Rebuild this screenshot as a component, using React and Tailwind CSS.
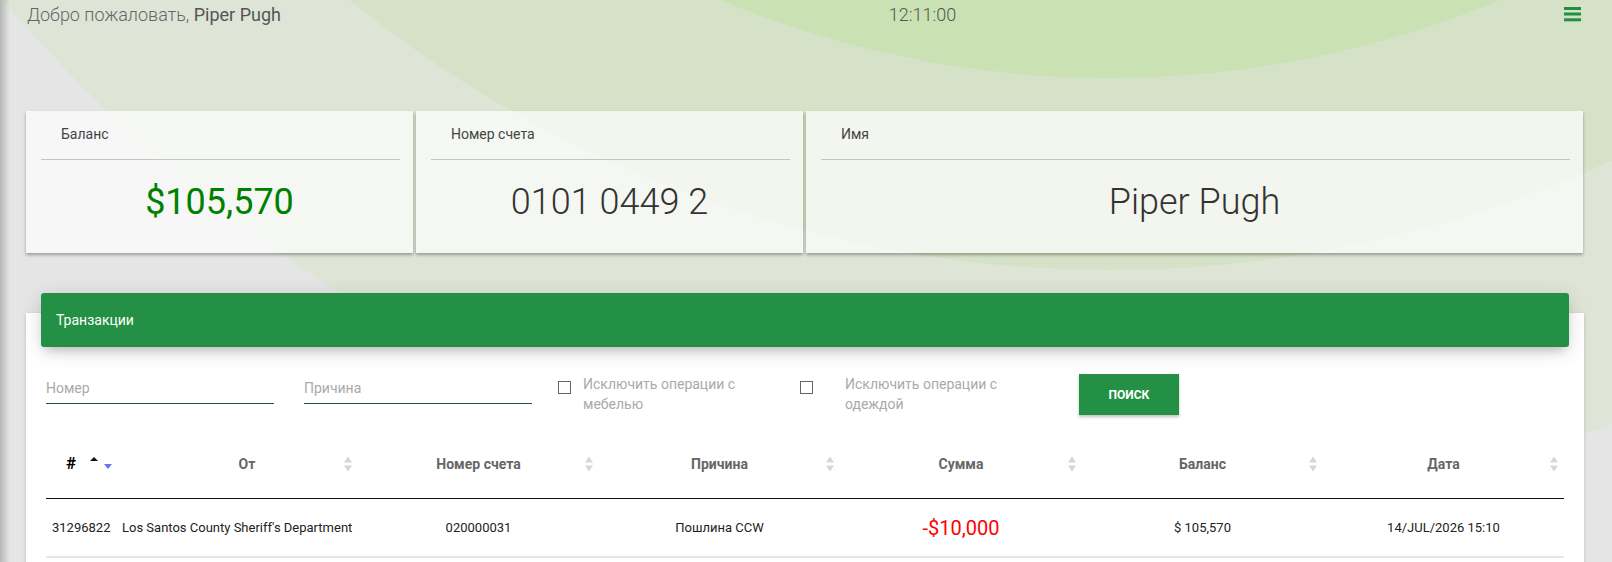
import React from "react";

function SortIcon() {
  return (
    <svg width="8" height="15" viewBox="0 0 8 15" className="absolute right-[6px] top-1/2 -translate-y-1/2">
      <path d="M0 6 L4 0 L8 6 Z" fill="#d6d6d6" />
      <path d="M0 9 L8 9 L4 15 Z" fill="#d6d6d6" />
    </svg>
  );
}

function StatCard({ label, value, valueClass, span }) {
  return (
    <div className={`flex h-[142px] flex-col bg-white/70 shadow-[0_2px_3px_rgba(0,0,0,0.32)] ${span || ""}`}>
      <div className="h-[48px] pl-[35px] pt-[13px] text-[14px] leading-5 text-[#444]">{label}</div>
      <div className="ml-[15px] mr-[13px] border-t border-[#c4c6c1]" />
      <div className="flex flex-1 items-center justify-center pb-[9px]">
        <span className={`text-[36px] leading-[43px] ${valueClass}`}>{value}</span>
      </div>
    </div>
  );
}

export default function App() {
  const cols = "grid grid-cols-[70px_242px_241px_241px_242px_241px_241px]";
  return (
    <div className="relative h-screen w-full overflow-hidden bg-[#e6e6e6] font-['Roboto',sans-serif]">
      <svg className="absolute left-0 top-0" width="1612" height="562" viewBox="0 0 1612 562">
        <rect x="0" y="0" width="1612" height="562" fill="#e5e5e5" />
        <circle cx="1110" cy="-936" r="1450" fill="#dee5d6" />
        <circle cx="1110" cy="-936" r="1206" fill="#d5e2c7" />
        <circle cx="1110" cy="-936" r="1014" fill="#c9e1b3" />
      </svg>
      <div className="absolute left-0 top-0 h-full w-[10px] bg-gradient-to-r from-black/20 to-transparent" />

      <div className="relative">
        {/* top bar */}
        <div className="flex items-start justify-between pl-[27px] pr-[31px] pt-[3px]">
          <div className="text-[18px] leading-6 font-light text-[#666]">
            Добро пожаловать, <span className="font-normal text-[#555]">Piper Pugh</span>
          </div>
          <div className="text-[18px] leading-6 font-light text-[#555]">12:11:00</div>
          <svg width="17" height="16" viewBox="0 0 17 16" className="mt-[4px]">
            <rect x="0" y="0" width="17" height="3" fill="#23903f" />
            <rect x="0" y="5.5" width="17" height="3" fill="#23903f" />
            <rect x="0" y="11.3" width="17" height="3" fill="#23903f" />
          </svg>
        </div>

        {/* stat cards */}
        <div className="ml-[26px] mr-[29px] mt-[84px] grid grid-cols-4 gap-[3px]">
          <StatCard label="Баланс" value="$105,570" valueClass="text-[#008000]" />
          <StatCard label="Номер счета" value="0101 0449 2" valueClass="font-light text-[#333]" />
          <StatCard label="Имя" value="Piper Pugh" valueClass="font-light text-[#333]" span="col-span-2" />
        </div>

        {/* transactions */}
        <div className="ml-[26px] mr-[28px] mt-[60px] flex flex-col bg-white px-[20px] pb-[20px] shadow-[0_1px_4px_0_rgba(0,0,0,0.16)]">
          <div className="-mx-[5px] -mt-[20px] flex h-[54px] items-center rounded-[3px] bg-[#239045] pl-[15px] text-[14px] text-white shadow-[0_4px_20px_0_rgba(0,0,0,0.14),0_7px_10px_-5px_rgba(0,0,0,0.22)]">
            Транзакции
          </div>

          {/* filters */}
          <div className="mt-[27px] flex items-start">
            <div className="h-[30px] w-[228px] border-b border-[#2c4d3b] pt-[4px] text-[14px] leading-5 text-[#aaa]">Номер</div>
            <div className="ml-[30px] h-[30px] w-[228px] border-b border-[#2c4d3b] pt-[4px] text-[14px] leading-5 text-[#aaa]">Причина</div>
            <div className="ml-[26px] flex w-[242px] items-start">
              <div className="mt-[7px] h-[13px] w-[13px] border border-[#666]" />
              <div className="ml-[12px] w-[165px] text-[14px] leading-5 text-[#aaa]">Исключить операции с мебелью</div>
            </div>
            <div className="flex w-[279px] items-start">
              <div className="mt-[7px] h-[13px] w-[13px] border border-[#666]" />
              <div className="ml-[32px] w-[165px] text-[14px] leading-5 text-[#aaa]">Исключить операции с одеждой</div>
            </div>
            <button className="h-[41px] w-[100px] bg-[#239045] text-[12px] font-bold text-white shadow-[0_2px_3px_rgba(0,0,0,0.25)]">
              ПОИСК
            </button>
          </div>

          {/* table */}
          <div className="mt-[15px]">
            <div className={`${cols} h-[69px] items-center border-b border-[#111] text-[14px] font-bold text-[#666]`}>
              <div className="relative flex items-center pl-[20px]">
                <span className="text-[17px] text-black">#</span>
                <svg width="24" height="14" viewBox="0 0 24 14" className="ml-[14px]">
                  <path d="M0 4 L4 0 L8 4 Z" fill="#111" />
                  <path d="M14 7 L22 7 L18 12 Z" fill="#6f75e6" />
                </svg>
              </div>
              <div className="relative pl-[20px] text-center">От<SortIcon /></div>
              <div className="relative text-center">Номер счета<SortIcon /></div>
              <div className="relative text-center">Причина<SortIcon /></div>
              <div className="relative text-center">Сумма<SortIcon /></div>
              <div className="relative text-center">Баланс<SortIcon /></div>
              <div className="relative text-center">Дата<SortIcon /></div>
            </div>
            <div className={`${cols} h-[59px] items-center border-b-2 border-[#e6e6e6] text-[13px] text-[#222]`}>
              <div className="pl-[6px]">31296822</div>
              <div className="pl-[6px] whitespace-nowrap">Los Santos County Sheriff's Department</div>
              <div className="text-center">020000031</div>
              <div className="text-center">Пошлина CCW</div>
              <div className="text-center text-[20px] text-[#ff0000]">-$10,000</div>
              <div className="text-center">$ 105,570</div>
              <div className="text-center">14/JUL/2026 15:10</div>
            </div>
          </div>
        </div>
      </div>
    </div>
  );
}
